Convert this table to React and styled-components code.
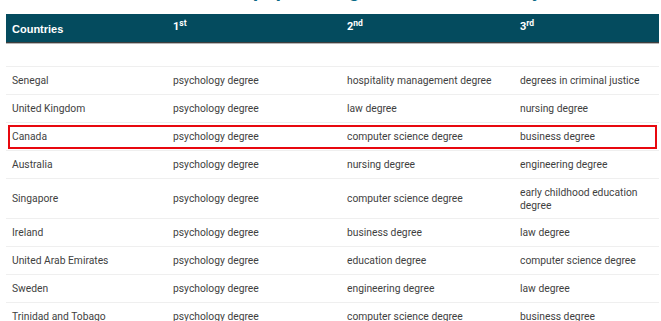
import React from "react";
import styled, { createGlobalStyle } from "styled-components";

const rows = [
  ["Senegal", "psychology degree", "hospitality management degree", "degrees in criminal justice"],
  ["United Kingdom", "psychology degree", "law degree", "nursing degree"],
  ["Canada", "psychology degree", "computer science degree", "business degree", true],
  ["Australia", "psychology degree", "nursing degree", "engineering degree"],
  ["Singapore", "psychology degree", "computer science degree", "early childhood education degree"],
  ["Ireland", "psychology degree", "business degree", "law degree"],
  ["United Arab Emirates", "psychology degree", "education degree", "computer science degree"],
  ["Sweden", "psychology degree", "engineering degree", "law degree"],
  ["Trinidad and Tobago", "psychology degree", "computer science degree", "business degree"],
];

const App = () => {
  return (
    <>
      <GlobalStyle />
      <Page>
        <Title>
          <span>The most popular degrees in each country</span>
        </Title>
        <Table>
          <HeadRow>
            <HeadCell>Countries</HeadCell>
            <HeadCell $ordinal>
              1<sup>st</sup>
            </HeadCell>
            <HeadCell $ordinal>
              2<sup>nd</sup>
            </HeadCell>
            <HeadCell $ordinal>
              3<sup>rd</sup>
            </HeadCell>
          </HeadRow>
          <SpacerRow />
          {rows.map((r) => (
            <Row key={r[0]} $highlight={r[4]}>
              <Cell>{r[0]}</Cell>
              <Cell>{r[1]}</Cell>
              <Cell>{r[2]}</Cell>
              <Cell>{r[3]}</Cell>
            </Row>
          ))}
        </Table>
      </Page>
    </>
  );
};
export default App;

const GlobalStyle = createGlobalStyle`
  html, body {
    margin: 0;
    padding: 0;
    background: #fff;
    overflow: hidden;
  }
  body {
    font-family: Roboto, "Liberation Sans", sans-serif;
  }
`;

const Page = styled.div`
  width: 661px;
  height: 321px;
  padding: 0 2px 0 6px;
  box-sizing: border-box;
  overflow: hidden;
`;

const Title = styled.div`
  height: 14px;
  overflow: hidden;
  text-align: center;
  span {
    display: block;
    margin-top: -20px;
    font-family: Roboto, "Liberation Sans", sans-serif;
    font-weight: 700;
    font-size: 20px;
    line-height: 20px;
    color: #0b6a87;
    padding-left: 40px;
  }
`;

const Table = styled.div`
  display: flex;
  flex-direction: column;
`;

const columns = "161px 174px 173px 1fr";

const HeadRow = styled.div`
  display: grid;
  grid-template-columns: ${columns};
  align-items: center;
  height: 28px;
  background: #044b5e;
  border-bottom: 1px solid #3e3e3e;
  box-shadow: 0 1px 0 #b5b5b5;
`;

const HeadCell = styled.div`
  padding-left: 6px;
  color: #fff;
  font-family: ${(p) => (p.$ordinal ? "Roboto" : '"Liberation Sans"')}, sans-serif;
  font-weight: 700;
  font-size: 11px;
  line-height: 13px;
  margin-top: 2px;
  margin-bottom: ${(p) => (p.$ordinal ? "5px" : "0")};
  sup {
    font-size: 8.5px;
    line-height: 0;
    vertical-align: 4px;
  }
`;

const SpacerRow = styled.div`
  height: 22px;
  margin-top: 1px;
  border-bottom: 1px solid #efefef;
`;

const Row = styled.div`
  display: grid;
  grid-template-columns: ${columns};
  align-items: center;
  min-height: 27px;
  border-bottom: 1px solid #efefef;
  outline: ${(p) => (p.$highlight ? "2px solid #e8080f" : "none")};
  outline-offset: -4px;
`;

const Cell = styled.div`
  padding: 6.5px 6px;
  color: #3f3f3f;
  font-size: 10.3px;
  line-height: 13px;
`;
